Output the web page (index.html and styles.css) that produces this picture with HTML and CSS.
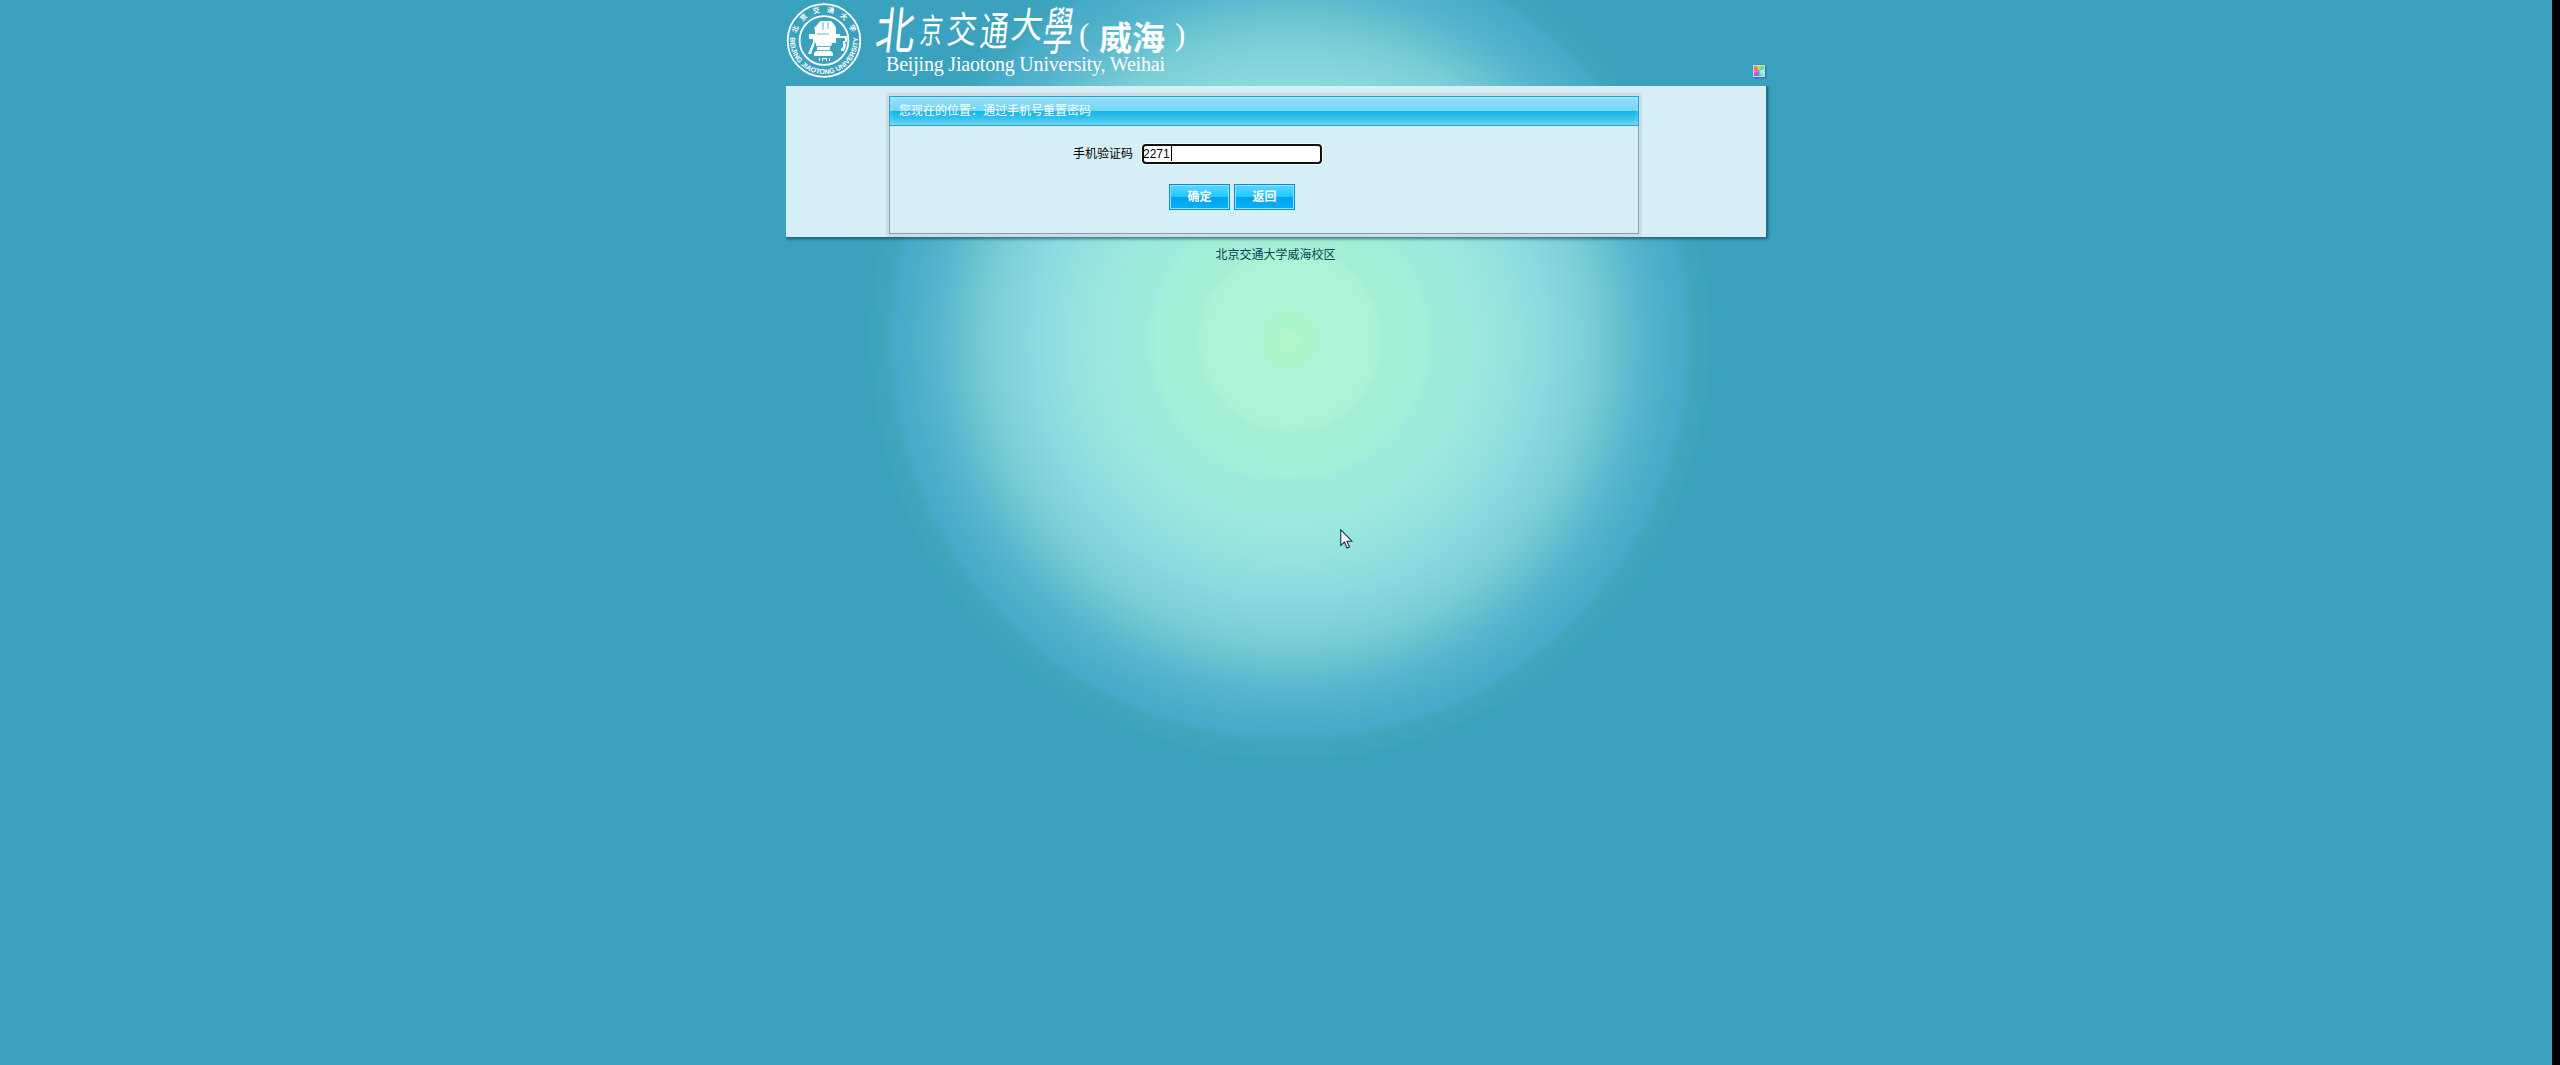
FILE: index.html
```html
<!DOCTYPE html>
<html lang="zh-CN">
<head>
<meta charset="utf-8">
<title>通过手机号重置密码</title>
<link rel="stylesheet" href="styles.css">
</head>
<body>
<div class="page">
  <header class="header">
    <svg class="logo" width="420" height="84" viewBox="0 0 420 84" role="img">
      <defs>
        <path id="arc-top" d="M9.500 40.500a28.500 28.500 0 0 1 57 0"/>
        <path id="arc-bottom" d="M4.500 35a33.900 33.900 0 1 0 67 0"/>
      </defs>
      <g fill="none" stroke="#fff">
        <circle cx="38" cy="40.500" r="36.300" stroke-width="1.800"/>
        <circle cx="38" cy="40.500" r="24.400" stroke-width="1.800"/>
      </g>
      <g fill="#fff">
        <path d="M33 22l3-1h9l3 3 2 4v6h4v2h7v6h-2v-4h-9v5h-4l-1 4h-1v3l3 3v3H28v-3l3-3v-3h-1v-4h-1l-4 11h-3l5-12v-3h-4v-5h6v-4l-1-2 4-4z"/>
        <path d="M57 41h2l1 5-2 5h-3v-2l2-2z"/>
        <path d="M33 58h1v3h-1zM36 58h5v3h-1v-2h-3v2h-1zM43 58h1v3h-1z"/>
      </g>
      <g stroke="#3aa1bf" stroke-width=".8" fill="none"><path d="M37 22v8M42 22v7M31 34h12M29 46.500h17M29 50.500h17"/></g>
      <g class="crest-text">
        <text font-size="7"><textPath href="#arc-top" startOffset="8%" textLength="74">北京交通大学</textPath></text>
        <text font-size="7"><textPath href="#arc-bottom" startOffset="2%" textLength="112">BEIJING JIAOTONG UNIVERSITY</textPath></text>
      </g>
      <g class="brush">
        <text transform="translate(88 49) skewX(-6) scale(.85 1.1)" font-size="46">北</text>
        <text transform="translate(133 43) skewX(-6) scale(.66 1)" font-size="34">京</text>
        <text transform="translate(160 43) skewX(-6) scale(.8 1)" font-size="37">交</text>
        <text transform="translate(193 46) skewX(-6) scale(.76 1.1)" font-size="37">通</text>
        <text transform="translate(224 38) skewX(-6) scale(.84 .95)" font-size="38">大</text>
        <text transform="translate(255 50) skewX(-8) scale(.62 1.08)" font-size="48">學</text>
      </g>
      <g class="campus">
        <text x="313" y="50" font-size="33" textLength="66">威海</text>
      </g>
      <g class="paren">
        <text x="293" y="45" font-size="31">(</text><text x="389" y="45" font-size="31">)</text>
      </g>
      <text class="latin" x="100" y="71" textLength="279">Beijing Jiaotong University, Weihai</text>
    </svg>
    <span class="skin"></span>
  </header>
  <main class="content">
    <section class="panel">
      <div class="panel-inner">
        <h1 class="title">您现在的位置：通过手机号重置密码</h1>
        <form class="form">
          <label class="label">手机验证码</label>
          <div class="field">2271<i class="caret"></i></div>
          <div class="actions">
            <button class="btn" type="button">确定</button>
            <button class="btn" type="button">返回</button>
          </div>
        </form>
      </div>
    </section>
  </main>
  <footer class="footer">北京交通大学威海校区</footer>
</div>
<svg class="cursor" width="14" height="21" viewBox="0 0 14 21"><path d="M.8.8v15.500l3.600-3.300 2.600 6 2.500-1.100-2.600-5.700h5z" fill="#fff" stroke="#12324a" stroke-width="1.100"/></svg>
</body>
</html>
```
FILE: styles.css
```css
* { box-sizing: border-box; }
html { background: #000; }
body {
  margin: 0;
  width: 2552px;
  height: 1065px;
  font: 12px/14px "Liberation Sans", "Noto Sans CJK SC", sans-serif;
  color: #000;
  background: #3aa1bf radial-gradient(circle at 1290px 340px,
    #b3f6ca 0, #b0f5cb 9px, #a9f6cb 13px, #a9f6cb 26px, #abf5d6 30px, #abf3d6 88px, #a3efd5 94px, #a4efd9 132px,
    #9debdd 146px, #9ce8de 190px, #93e1de 225px, #89dadf 258px, #7bced5 300px,
    #65c0cf 330px, #58b6cf 350px, #4fb0c8 370px, #45abca 394px, #3fa6bc 404px, #39a2bb 425px, #3aa1bf 445px);
}
.page { width: 980px; margin: 0 auto; }
.header { height: 86px; display: flex; justify-content: space-between; align-items: flex-end; padding: 0 1px 9px 0; }
.logo { display: block; align-self: flex-start; flex: none; margin-bottom: -9px; overflow: visible; }
.crest-text text { fill: #fff; font-family: "Liberation Sans", "Noto Sans CJK SC", sans-serif; font-weight: bold; }
.brush text { fill: #fff; font-family: "Noto Sans CJK TC", sans-serif; font-weight: 400; }
.campus text { fill: #fff; font-family: "Noto Sans CJK SC", sans-serif; font-weight: 700; }
.paren text { fill: #fff; font-family: "Liberation Serif", serif; }
.latin { fill: #fff; font: 20px "Liberation Serif", serif; }
.skin {
  width: 12px; height: 12px; border: 1px solid #c9d5f3;
  background: conic-gradient(#bbee55, #44e777 45deg, #a5f7e5 90deg, #9bdcf5 140deg, #6793ef 185deg, #b04df0 225deg, #ff78cf 265deg, #f66 295deg, #ff8a38 325deg, #bbee55);
  box-shadow: 1px 1px 2px #286f95;
}
.content { height: 151px; padding: 7px 124px 0 100px; background: #d6eef6; box-shadow: 1px 1px 3px 1px rgba(0, 60, 80, .65); clip-path: inset(0 -6px -6px 0); }
.panel { height: 144px; padding: 3px; background: #ccdde7; }
.panel-inner { height: 138px; border: 1px solid #8a9daa; background: #d6eef6; }
.title {
  height: 30px; margin: -1px -1px 0; padding: 1px 9px 0; border: 1px solid #17a8d8;
  color: #fff; font-size: 12px; line-height: 27px; font-weight: normal;
  background: linear-gradient(#98dffa, #76d4f5 49%, #18b5e6 50%, #21bce9 65%, #66cff0);
  box-shadow: inset 0 0 5px rgba(190, 240, 255, .45);
}
.form { display: grid; grid-template-columns: 243px 180px; column-gap: 9px; padding-top: 18px; }
.label { text-align: right; line-height: 20px; }
.field { height: 20px; display: flex; align-items: center; padding-bottom: 1px; border: 2px solid #111; border-radius: 4px; background: #fff; box-shadow: 0 0 0 1px #f6fbfc; text-indent: -1px; }
.caret { width: 1px; height: 15px; margin-left: 1px; background: #000; }
.actions { grid-column: 1 / -1; display: flex; gap: 4px; padding: 20px 0 0 279px; }
.btn {
  width: 61px; height: 26px; padding: 0 0 1px; border: 1px solid #078dd8; color: #fff;
  font: bold 12px/14px "Liberation Sans", "Noto Sans CJK SC", sans-serif;
  background: linear-gradient(#5cd6ff, #25c6ff 50%, #00a2ed 51%, #06b2f2);
  box-shadow: inset 0 0 0 1px #90e4ff;
}
.footer { padding-top: 11px; margin-left: -1px; color: #064455; text-align: center; }
.cursor { position: absolute; left: 1340px; top: 529px; }
```
